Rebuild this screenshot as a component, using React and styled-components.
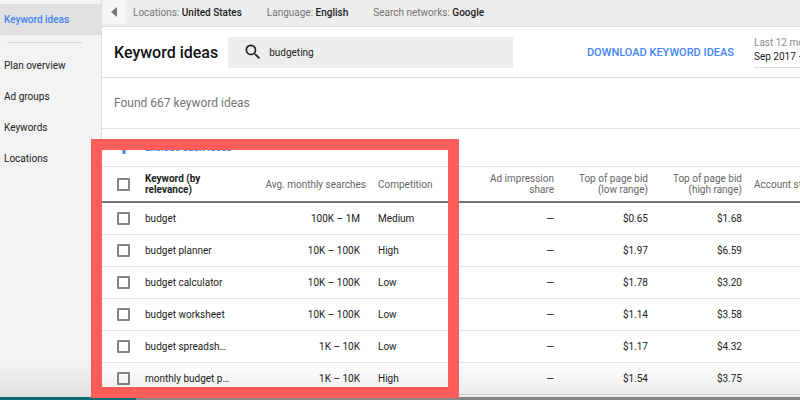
import React, { useState } from 'react';
import styled, { createGlobalStyle } from 'styled-components';


const navItems = ['Plan overview', 'Ad groups', 'Keywords', 'Locations']

const settings = [
    { label: 'Locations', value: 'United States' },
    { label: 'Language', value: 'English' },
    { label: 'Search networks', value: 'Google' },
]

const ideas = [
    { keyword: 'budget', searches: '100K – 1M', competition: 'Medium', low: '$0.65', high: '$1.68' },
    { keyword: 'budget planner', searches: '10K – 100K', competition: 'High', low: '$1.97', high: '$6.59' },
    { keyword: 'budget calculator', searches: '10K – 100K', competition: 'Low', low: '$1.78', high: '$3.20' },
    { keyword: 'budget worksheet', searches: '10K – 100K', competition: 'Low', low: '$1.14', high: '$3.58' },
    { keyword: 'budget spreadsheet', searches: '1K – 10K', competition: 'Low', low: '$1.17', high: '$4.32' },
    { keyword: 'monthly budget planner', searches: '1K – 10K', competition: 'High', low: '$1.54', high: '$3.75' },
]

const App = () => {

    const [query, setQuery] = useState('budgeting')

    return (
        <Page>
            <GlobalStyle />
            <Workspace>
                <Sidebar>
                    <ActiveLink href="#">Keyword ideas</ActiveLink>
                    <Divider />
                    {navItems.map((item) => (
                        <NavLink href="#" key={item}>{item}</NavLink>
                    ))}
                </Sidebar>
                <Main>
                    <SettingsBar>
                        <CollapseButton aria-label="Collapse menu">
                            <svg width="6" height="10" viewBox="0 0 6 10"><path d="M6 0v10L0 5z" fill="#757575" /></svg>
                        </CollapseButton>
                        {settings.map(({ label, value }) => (
                            <Setting key={label}>{label}: <strong>{value}</strong></Setting>
                        ))}
                    </SettingsBar>
                    <Header>
                        <Title>Keyword ideas</Title>
                        <SearchBox>
                            <svg width="20" height="20" viewBox="0 0 24 24">
                                <path fill="#212121" d="M15.5 14h-.79l-.28-.27A6.47 6.47 0 0 0 16 9.5 6.5 6.5 0 1 0 9.5 16c1.61 0 3.09-.59 4.23-1.57l.27.28v.79l5 4.99L20.49 19l-4.99-5zm-6 0C7.01 14 5 11.99 5 9.5S7.01 5 9.5 5 14 7.01 14 9.5 11.99 14 9.5 14z" />
                            </svg>
                            <input aria-label="Search keywords" value={query} onChange={(e) => setQuery(e.target.value)} />
                        </SearchBox>
                        <DownloadButton>Download keyword ideas</DownloadButton>
                        <DateButton>
                            <span>Last 12 months</span>
                            Sep 2017 – Aug 2018
                        </DateButton>
                    </Header>
                    <Summary>Found 667 keyword ideas</Summary>
                    <FilterBar>
                        <svg width="14" height="14" viewBox="0 0 14 14"><path d="M0 0h14L8.500 7v6h-3V7z" fill="#4285f4" /></svg>
                        <a href="#">Exclude adult ideas</a>
                    </FilterBar>
                    <Table>
                        <colgroup>
                            <Col $width={43} />
                            <Col $width={85} />
                            <Col $width={136} />
                            <Col $width={94} />
                            <Col $width={94} />
                            <Col $width={94} />
                            <Col $width={94} />
                            <Col />
                        </colgroup>
                        <thead>
                            <tr>
                                <CheckHead><Checkbox aria-label="Select all keywords" /></CheckHead>
                                <Th $sorted>Keyword (by relevance)</Th>
                                <Th $right>Avg. monthly searches</Th>
                                <Th $inset>Competition</Th>
                                <Th $right>Ad impression<br />share</Th>
                                <Th $right>Top of page bid<br />(low range)</Th>
                                <Th $right>Top of page bid<br />(high range)</Th>
                                <Th $inset>Account status</Th>
                            </tr>
                        </thead>
                        <tbody>
                            {ideas.map((idea) => (
                                <tr key={idea.keyword}>
                                    <CheckCell><Checkbox aria-label={`Select ${idea.keyword}`} /></CheckCell>
                                    <Td>{idea.keyword}</Td>
                                    <Td $right $padded>{idea.searches}</Td>
                                    <Td $inset>{idea.competition}</Td>
                                    <Td $right>—</Td>
                                    <Td $right>{idea.low}</Td>
                                    <Td $right>{idea.high}</Td>
                                    <Td />
                                </tr>
                            ))}
                        </tbody>
                    </Table>
                </Main>
                <Shade />
            </Workspace>
            <Desktop />
            <Highlight />
        </Page>
    );
};


const GlobalStyle = createGlobalStyle`
    *{
        box-sizing:border-box;
    }

    body{
        margin:0;
        font-family:Roboto, "Liberation Sans", sans-serif;
        font-size:10px;
        color:#212121;
        background-color:white;
    }

    a{
        text-decoration:none;
    }

    button, input{
        font-family:inherit;
        font-size:inherit;
        color:inherit;
        border:0;
        padding:0;
        margin:0;
        background:none;
    }
`

const Page = styled.div`
    position:relative;
    display:flex;
    flex-direction:column;
    height:100vh;
    overflow:hidden;
`

const Workspace = styled.div`
    position:relative;
    display:flex;
    flex:1;
    min-height:0;
`

const Sidebar = styled.nav`
    display:flex;
    flex-direction:column;
    flex:none;
    width:102px;
    padding-top:4px;
    background-color:#f3f3f3;
    border-right:1px solid #dcdcdc;
`

const NavLink = styled.a`
    padding:0 4px;
    line-height:31px;
    color:#212121;
`

const ActiveLink = styled(NavLink)`
    font-weight:500;
    color:#4285f4;
    background-color:#e0e0e0;
`

const Divider = styled.hr`
    width:75px;
    margin:7px;
    border:0;
    border-top:1px solid #d6d6d6;
`

const Main = styled.main`
    flex:1;
    min-width:0;
    overflow:hidden;
`

const SettingsBar = styled.div`
    display:flex;
    align-items:center;
    gap:25px;
    height:27px;
    padding-bottom:2px;
    background-color:#ededed;
    border-bottom:1px solid #d6d6d6;
`

const CollapseButton = styled.button`
    display:flex;
    align-items:center;
    justify-content:center;
    align-self:stretch;
    width:24px;
    margin-right:-18px;
    background-color:#f5f5f5;
`

const Setting = styled.span`
    color:#757575;
    white-space:nowrap;

    strong{
        font-weight:500;
        color:#212121;
    }
`

const Header = styled.header`
    display:flex;
    align-items:center;
    height:51px;
    padding-left:12px;
    border-bottom:1px solid #dedede;
`

const Title = styled.h1`
    margin:0;
    font-size:16px;
    font-weight:500;
    white-space:nowrap;
    color:#111;
`

const SearchBox = styled.div`
    display:flex;
    align-items:center;
    flex:1;
    gap:6px;
    height:31px;
    margin-left:10px;
    padding-left:15px;
    background-color:#ededed;

    svg{
        flex:none;
    }

    input{
        flex:1;
        min-width:0;
    }
`

const DownloadButton = styled.button`
    margin-left:74px;
    font-size:11px;
    font-weight:500;
    text-transform:uppercase;
    white-space:nowrap;
    color:#4285f4;
`

const DateButton = styled.button`
    width:46px;
    margin-left:20px;
    padding-bottom:3px;
    overflow:hidden;
    text-align:left;
    line-height:14px;
    white-space:nowrap;
    border-bottom:1px solid #dedede;

    span{
        display:block;
        color:#8a8a8a;
    }
`

const Summary = styled.p`
    margin:0;
    padding-left:12px;
    font-size:12px;
    line-height:50px;
    color:#757575;
    border-bottom:1px solid #e2e2e2;
`

const FilterBar = styled.div`
    display:flex;
    align-items:center;
    gap:14px;
    height:38px;
    padding-left:15px;
    border-bottom:1px solid #e2e2e2;

    a{
        font-weight:500;
        color:#4285f4;
    }
`

const Table = styled.table`
    width:100%;
    table-layout:fixed;
    border-collapse:separate;
    border-spacing:0;
`

const Col = styled.col`
    width:${props => props.$width ? `${props.$width}px` : "auto"};
`

const Th = styled.th`
    height:36px;
    padding:0;
    padding-left:${props => props.$inset ? "12px" : "0"};
    text-align:${props => props.$right ? "right" : "left"};
    font-weight:${props => props.$sorted ? "700" : "400"};
    line-height:11px;
    color:${props => props.$sorted ? "#212121" : "#666"};
    white-space:${props => props.$sorted ? "normal" : "nowrap"};
    border-bottom:2px solid #757575;
`

const Td = styled.td`
    height:32px;
    padding:0;
    padding-left:${props => props.$inset ? "12px" : "0"};
    padding-right:${props => props.$padded ? "6px" : "0"};
    text-align:${props => props.$right ? "right" : "left"};
    overflow:hidden;
    text-overflow:ellipsis;
    white-space:nowrap;
    border-bottom:1px solid #e2e2e2;
`

const CheckHead = styled(Th)`
    padding-left:15px;
`

const CheckCell = styled(Td)`
    padding-left:15px;
`

const Checkbox = styled.input.attrs({ type: 'checkbox' })`
    display:block;
    appearance:none;
    width:13px;
    height:13px;
    border:2px solid #858585;
    border-radius:1px;

    &:checked{
        background-color:#4285f4;
    }
`

const Shade = styled.div`
    position:absolute;
    left:0;
    right:0;
    bottom:0;
    height:34px;
    background:linear-gradient(transparent, rgba(0,0,0,.08));
    pointer-events:none;
`

const Desktop = styled.div`
    flex:none;
    height:3px;
    background:linear-gradient(90deg, #0c6c74 136px, #858585 136px);
`

const Highlight = styled.div`
    position:absolute;
    top:139px;
    left:91px;
    width:368px;
    height:259px;
    border:11px solid #ff5c5c;
    pointer-events:none;
`

export default App
